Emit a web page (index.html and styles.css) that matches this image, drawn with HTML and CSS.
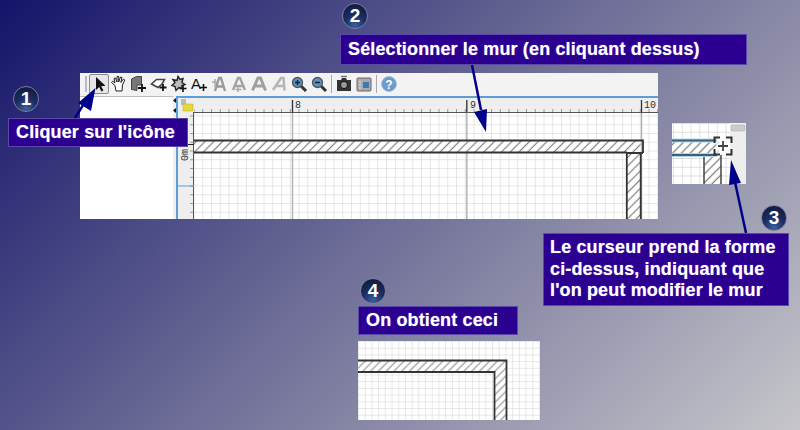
FILE: index.html
```html
<!DOCTYPE html>
<html lang="fr">
<head>
<meta charset="utf-8">
<title>Modifier un mur</title>
<link rel="stylesheet" href="styles.css">
</head>
<body>
<main class="slide">
  <section class="shot">
    <div class="toolbar">
      <span class="grip"></span>
      <span class="tool tool-active"><svg viewBox="0 0 18 18" class="ico"><path d="M6 2v13l3.200-3 2.200 4.600 2-1-2.200-4.400 4.300-.4z" fill="#111"/></svg></span>
      <span class="tool"><svg viewBox="0 0 18 18" class="ico"><path d="M5 10.500 1.500 7.500l1.200-1.300L5 8 4 3.500l1.500-.5L7 7V1.500h1.700V7L10.500 2l1.500.5L10.800 7.500 13.500 4l1.300 1L12.500 10l-.5 6H6z" fill="#fff" stroke="#222" stroke-width="1"/></svg></span>
      <span class="tool"><svg viewBox="0 0 18 18" class="ico"><path d="M1.500 4l5-2.500h5V10H7v5.500l-5.500-1z" fill="#777" stroke="#444"/><path d="M12 9v8M8 13h8" stroke="#111" stroke-width="1.800"/></svg></span>
      <span class="tool"><svg viewBox="0 0 18 18" class="ico"><path d="M1.500 9l5-4.500h8L12 9l-4 3.500z" fill="#fff" stroke="#444" stroke-width="1.600"/><path d="M13 9v7M9.500 12.500h7" stroke="#111" stroke-width="1.800"/></svg></span>
      <span class="tool"><svg viewBox="0 0 18 18" class="ico"><path d="M8 1.500l2 3 3-1-1 4 3 2-3 1v3l-3-1-3 3-1-4-3-1 3-3-2-3 4 1z" fill="#bbb" stroke="#222" stroke-width="1.400"/><path d="M13 10v7M9.500 13.500h7" stroke="#111" stroke-width="1.600"/></svg></span>
      <span class="tool"><span class="tool-a">A</span><svg viewBox="0 0 18 18" class="ico ico-over"><path d="M13.500 9v7M10 12.500h7" stroke="#111" stroke-width="1.600"/></svg></span>
      <span class="tool"><svg viewBox="0 0 18 18" class="ico"><path d="M5 16 9 3h2l4 13M7 11.500h6" fill="none" stroke="#999" stroke-width="2.400"/><path d="M2 7h6M5 4v8" stroke="#aaa" stroke-width="1.500"/></svg></span>
      <span class="tool"><svg viewBox="0 0 18 18" class="ico"><path d="M3 15 8 3h2l5 12M5.500 11h7" fill="none" stroke="#a3a3a3" stroke-width="2.400"/><path d="M8 12v5M5.500 14.500h6" stroke="#aaa" stroke-width="1.500"/></svg></span>
      <span class="tool"><svg viewBox="0 0 18 18" class="ico"><path d="M2.500 15.500 8 3h2.500l5 12.500M5 11h8" fill="none" stroke="#a0a0a0" stroke-width="3"/></svg></span>
      <span class="tool"><svg viewBox="0 0 18 18" class="ico"><path d="M3 15 11 3h2.500l1 12.500M6.500 11h7" fill="none" stroke="#b5b5b5" stroke-width="2.500"/></svg></span>
      <span class="tool"><svg viewBox="0 0 18 18" class="ico"><path d="M11 11l5 5" stroke="#333" stroke-width="3"/><circle cx="7.500" cy="7.500" r="5" fill="#5a8fc0" stroke="#555" stroke-width="1.300"/><path d="M5 7.500h5M7.500 5v5" stroke="#123" stroke-width="1.400"/></svg></span>
      <span class="tool"><svg viewBox="0 0 18 18" class="ico"><path d="M11 11l5 5" stroke="#333" stroke-width="3"/><circle cx="7.500" cy="7.500" r="5" fill="#5a8fc0" stroke="#555" stroke-width="1.300"/><path d="M5 7.500h5" stroke="#123" stroke-width="1.400"/></svg></span>
      <span class="sep"></span>
      <span class="tool"><svg viewBox="0 0 18 18" class="ico"><path d="M2 5h4l1-2h4l1 2h4v11H2z" fill="#333"/><circle cx="9" cy="10" r="3.600" fill="#999" stroke="#111"/><path d="M6 1.500h6" stroke="#777" stroke-width="1.500"/></svg></span>
      <span class="tool"><svg viewBox="0 0 18 18" class="ico"><rect x="2" y="3" width="14" height="13" rx="1" fill="#aaa" stroke="#666"/><rect x="8" y="7" width="6" height="6" fill="#3f78b5"/><path d="M4 7h2M4 10h2M4 13h2" stroke="#eee"/></svg></span>
      <span class="sep"></span>
      <span class="tool"><svg viewBox="0 0 18 18" class="ico"><circle cx="9" cy="9" r="7.500" fill="#6d9cca" stroke="#a9bed4"/><text x="9" y="13.500" class="help">?</text></svg></span>
    </div>
    <div class="shot-body">
      <div class="tree"></div>
      <div class="splitter"><i class="tri"></i><i class="tri"></i></div>
      <svg class="plan" viewBox="0 0 482 123" width="482" height="123">
        <defs>
          <pattern id="grid" width="8.750" height="8.750" patternUnits="userSpaceOnUse" x="1" y="3">
            <path d="M8.750 0V8.750M0 8.750H8.750" fill="none" stroke="#d2d2d2" stroke-width="1.100"/>
          </pattern>
          <pattern id="ticks" width="8.750" height="8.750" patternUnits="userSpaceOnUse" x="1" y="3">
            <path d="M8.750 0V8.750M0 8.750H8.750" fill="none" stroke="#444"/>
          </pattern>
          <pattern id="hatch" width="6.200" height="6.200" patternUnits="userSpaceOnUse" patternTransform="rotate(45)">
            <path d="M3.100 0V6.200" stroke="#808080" stroke-width="1.200"/>
          </pattern>
        </defs>
        <rect width="482" height="123" fill="#fff"/>
        <rect width="482" height="17" fill="#eee"/>
        <rect width="18" height="123" fill="#eee"/>
        <rect width="482" height="2" fill="#5c9fd6"/>
        <rect width="2" height="123" fill="#5c9fd6"/>
        <rect x="18" y="17" width="464" height="106" fill="url(#grid)"/>
        <rect x="18" y="13" width="464" height="4" fill="url(#ticks)"/>
        <rect x="14" y="17" width="4" height="106" fill="url(#ticks)"/>
        <path d="M18 16.500H482M17.500 16V123" stroke="#555"/>
        <path d="M116.500 4V123M290.800 4V123M465.500 4V123" stroke="#b5b5b5" stroke-width="1.500"/>
        <path d="M116.500 4V17M290.800 4V17M465.500 4V17" stroke="#333" stroke-width="1.200"/>
        <path d="M2 90H18" stroke="#5c9fd6"/>
        <path d="M10 48.500H18" stroke="#222"/>
        <text x="119" y="12" class="rule">8</text>
        <text x="294" y="12" class="rule">9</text>
        <text x="468" y="12" class="rule">10</text>
        <text transform="translate(12 65) rotate(-90)" class="rule">0m</text>
        <path d="M5 3h5v6H5z" fill="#bbb"/>
        <path d="M7 8h10v7H7z" fill="#e8d83c" stroke="#b9a92a" stroke-width=".5"/>
        <path d="M18 44H464.700V123H450.700V56.500H18z" fill="#fff"/>
        <path d="M18 44H464.700V123H450.700V56.500H18z" fill="url(#hatch)"/>
        <path d="M18 44.500H467V57M467 57H450.800V123M464.700 57V123M18 56.500H451" fill="none" stroke="#333" stroke-width="1.800"/>
      </svg>
    </div>
  </section>

  <section class="inset-cursor">
    <svg viewBox="0 0 74 61" width="74" height="61">
      <defs>
        <pattern id="gridb" width="8.750" height="8.750" patternUnits="userSpaceOnUse" x="2" y="1"><path d="M8.750 0V8.750M0 8.750H8.750" fill="none" stroke="#d4d4d4" stroke-width="1.300"/></pattern>
        <pattern id="hatchb" width="6.200" height="6.200" patternUnits="userSpaceOnUse" patternTransform="rotate(45)"><path d="M3.100 0V6.200" stroke="#808080" stroke-width="1.300"/></pattern>
      </defs>
      <rect width="74" height="61" fill="#fff"/>
      <rect width="58" height="61" fill="url(#gridb)"/>
      <rect x="58" width="16" height="61" fill="#eee"/>
      <rect x="59" y="2" width="14" height="6" rx="1" fill="#ccc" stroke="#aaa" stroke-width=".5"/>
      <path d="M32 31H49V61H32z" fill="#fff"/>
      <path d="M32 31H49V61H32z" fill="url(#hatchb)"/>
      <path d="M0 18H47V31H0z" fill="#fff"/>
      <path d="M0 18H47V31H0z" fill="url(#hatchb)"/>
      <path d="M32 32V61M49 32V61" stroke="#444" stroke-width="1.500"/>
      <path d="M0 17.500H45M0 32H45" stroke="#b5d4ea" stroke-width="4"/>
      <path d="M0 17.500H45M0 32H45" stroke="#35617f" stroke-width="1.800"/>
      <rect x="44" y="15" width="14" height="16" fill="#fff" fill-opacity=".65"/>
      <path d="M42.500 20V14.500H48M54 14.500H59.500V20M59.500 26V31.500H54M48 31.500H42.500V26" fill="none" stroke="#333" stroke-width="2"/>
      <path d="M51 18V28M46 23H56" stroke="#444" stroke-width="1.800"/>
    </svg>
  </section>

  <section class="inset-result">
    <svg viewBox="0 0 182 79" width="182" height="79">
      <defs>
        <pattern id="gridc" width="6.700" height="6.700" patternUnits="userSpaceOnUse" x="1" y="1"><path d="M6.700 0V6.700M0 6.700H6.700" fill="none" stroke="#d2d2d2"/></pattern>
        <pattern id="hatchc" width="5.500" height="5.500" patternUnits="userSpaceOnUse" patternTransform="rotate(45)"><path d="M2.750 0V5.500" stroke="#8c8c8c" stroke-width="1.100"/></pattern>
      </defs>
      <rect width="182" height="79" fill="#fff"/>
      <rect width="182" height="79" fill="url(#gridc)"/>
      <path d="M0 20H149V79H136V31H0z" fill="#fff"/>
      <path d="M0 20H149V79H136V31H0z" fill="url(#hatchc)"/>
      <path d="M0 19.500H148.500V79M0 31H136.500V79" fill="none" stroke="#333" stroke-width="1.800"/>
    </svg>
  </section>

  <svg class="arrows" viewBox="0 0 800 430" width="800" height="430">
    <path d="M75 118 85 102" class="shaft"/>
    <path d="M95.500 88 91 111 78 103z" class="head"/>
    <path d="M472 65 481 110" class="shaft"/>
    <path d="M486 132 474 112 487 109z" class="head"/>
    <path d="M746 233 735 182" class="shaft"/>
    <path d="M731 160 741 183 729 185z" class="head"/>
  </svg>

  <span class="num num-1">1</span>
  <span class="num num-2">2</span>
  <span class="num num-3">3</span>
  <span class="num num-4">4</span>

  <p class="label label-1">Cliquer sur l'icône</p>
  <p class="label label-2">Sélectionner le mur (en cliquant dessus)</p>
  <p class="label label-3">Le curseur prend la forme<br>ci-dessus, indiquant que<br>l'on peut modifier le mur</p>
  <p class="label label-4">On obtient ceci</p>
</main>
</body>
</html>
```
FILE: styles.css
```css
* { box-sizing: border-box; }
html, body { margin: 0; padding: 0; }
body { width: 800px; height: 430px; overflow: hidden; }

.slide {
  position: relative;
  width: 800px;
  height: 430px;
  background: linear-gradient(135deg, #14146a 0%, #6f6f98 50%, #c6c6ca 100%);
  font-family: "Liberation Sans", Arial, sans-serif;
}

.shot {
  position: absolute;
  left: 80px;
  top: 73px;
  width: 578px;
  height: 146px;
  display: flex;
  flex-direction: column;
  background: #f2f2f2;
}

.toolbar {
  height: 21px;
  display: flex;
  align-items: center;
  padding-left: 5px;
  background: #f3f3f3;
}
.grip { width: 2px; height: 16px; background: #bbb; margin-right: 2px; }
.tool {
  position: relative;
  width: 20px;
  height: 20px;
  display: flex;
  align-items: center;
  justify-content: center;
  flex: none;
}
.tool-active { border: 1px solid #8a8a8a; border-radius: 2px; background: #e6e6e6; }
.ico { width: 18px; height: 18px; display: block; flex: none; }
.ico-over { position: absolute; left: 1px; top: 1px; }
.tool-a { font-size: 15px; color: #111; margin-left: -6px; }
.help { font: bold 12px "Liberation Sans", sans-serif; fill: #fff; text-anchor: middle; }
.sep { width: 1px; height: 18px; background: #aaa; margin: 0 2px; flex: none; }
.sep:first-of-type { margin-left: 3px; }

.shot-body { flex: 1; display: flex; min-height: 0; margin-top: 2px; }
.tree { width: 93px; background: #fff; border-top: 1px solid #bbb; }
.splitter {
  width: 3px;
  display: flex;
  flex-direction: column;
  align-items: center;
  gap: 5px;
  padding-top: 2px;
  background: #efefef;
}
.tri {
  display: block;
  width: 3px;
  height: 5px;
  background: #111;
  clip-path: polygon(0 50%, 100% 0, 100% 100%);
}
.plan { display: block; flex: none; }
.rule { font: 10px "Liberation Mono", monospace; fill: #333; }

.inset-cursor { position: absolute; left: 672px; top: 123px; width: 74px; height: 61px; }
.inset-cursor svg { display: block; }
.inset-result { position: absolute; left: 358px; top: 341px; width: 182px; height: 79px; }
.inset-result svg { display: block; }

.arrows { position: absolute; left: 0; top: 0; pointer-events: none; }
.shaft { stroke: #00008a; stroke-width: 2.500; fill: none; }
.head { fill: #00008a; }

.num {
  position: absolute;
  width: 26px;
  height: 26px;
  border-radius: 50%;
  display: flex;
  align-items: center;
  justify-content: center;
  color: #fff;
  font-weight: 700;
  font-size: 19px;
  background: radial-gradient(circle at 50% 90%, #3a5f9e 0%, #1a2c60 45%, #0e1638 100%);
  border: 1px solid #7d7d9d;
}
.num-1 { left: 13px; top: 86px; }
.num-2 { left: 342px; top: 3px; }
.num-3 { left: 761px; top: 205px; }
.num-4 { left: 360px; top: 278px; }

.label {
  position: absolute;
  margin: 0;
  background: #2b0090;
  border: 1px solid #5a4aa8;
  color: #fff;
  font-weight: 700;
  font-size: 18px;
  letter-spacing: .14px;
  line-height: 21.500px;
  padding: 3px 6px;
  white-space: nowrap;
  text-shadow: 0 0 1px rgba(205, 195, 255, .7);
}
.label-1 { left: 8px; top: 118px; width: 180px; height: 29px; padding-left: 7px; }
.label-2 { left: 340px; top: 34px; width: 407px; height: 31px; padding-left: 7px; padding-top: 4px; }
.label-3 { left: 543px; top: 233px; width: 246px; height: 73px; }
.label-4 { left: 358px; top: 306px; width: 160px; height: 29px; padding-left: 7px; }
```
